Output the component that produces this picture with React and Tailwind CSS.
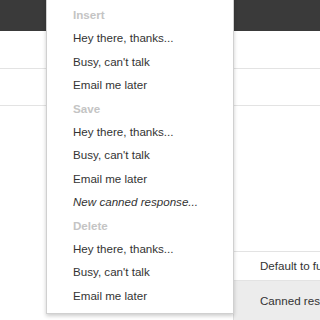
import React from 'react';

// Canned responses dropdown over a settings page
const sections = [
  { title: 'Insert', items: ['Hey there, thanks...', "Busy, can't talk", 'Email me later'] },
  {
    title: 'Save',
    items: ['Hey there, thanks...', "Busy, can't talk", 'Email me later'],
    extra: 'New canned response...',
  },
  { title: 'Delete', items: ['Hey there, thanks...', "Busy, can't talk", 'Email me later'] },
];

const Row = ({ children, className = '' }) => (
  <div className={`h-[23.4px] flex items-center pl-[26px] whitespace-nowrap ${className}`}>{children}</div>
);

export default function App() {
  return (
    <div className="relative w-[320px] h-[320px] overflow-hidden bg-white font-['Liberation_Sans',Arial,sans-serif] text-[11.6px] text-[#333]">
      {/* page behind */}
      <div className="h-[31px] bg-[#3a3a3a]" />
      <div className="h-[38px] border-b border-[#e3e3e3]" />
      <div className="h-[37px] border-b border-[#e3e3e3]" />
      <div className="ml-[233px] mt-[145px] border-l border-[#dcdcdc]">
        <div className="h-[29px] border-t border-[#e3e3e3] flex items-center pl-[26px] whitespace-nowrap">
          Default to full
        </div>
        <div className="h-[40px] border-t border-[#e3e3e3] bg-[#ececec] pt-[11px] pl-[26px] whitespace-nowrap">
          Canned responses
        </div>
      </div>

      {/* dropdown menu */}
      <div className="absolute left-[46px] top-[-6px] w-[188px] bg-white border border-[#d0d0d0] shadow-[0_2px_4px_rgba(0,0,0,0.2)] pt-[8px] pb-[6px]">
        {sections.map((s) => (
          <div key={s.title}>
            <Row className="font-bold text-[#c4c4c4]">{s.title}</Row>
            {s.items.map((it, i) => (
              <Row key={i}>{it}</Row>
            ))}
            {s.extra && <Row className="italic">{s.extra}</Row>}
          </div>
        ))}
      </div>
    </div>
  );
}
